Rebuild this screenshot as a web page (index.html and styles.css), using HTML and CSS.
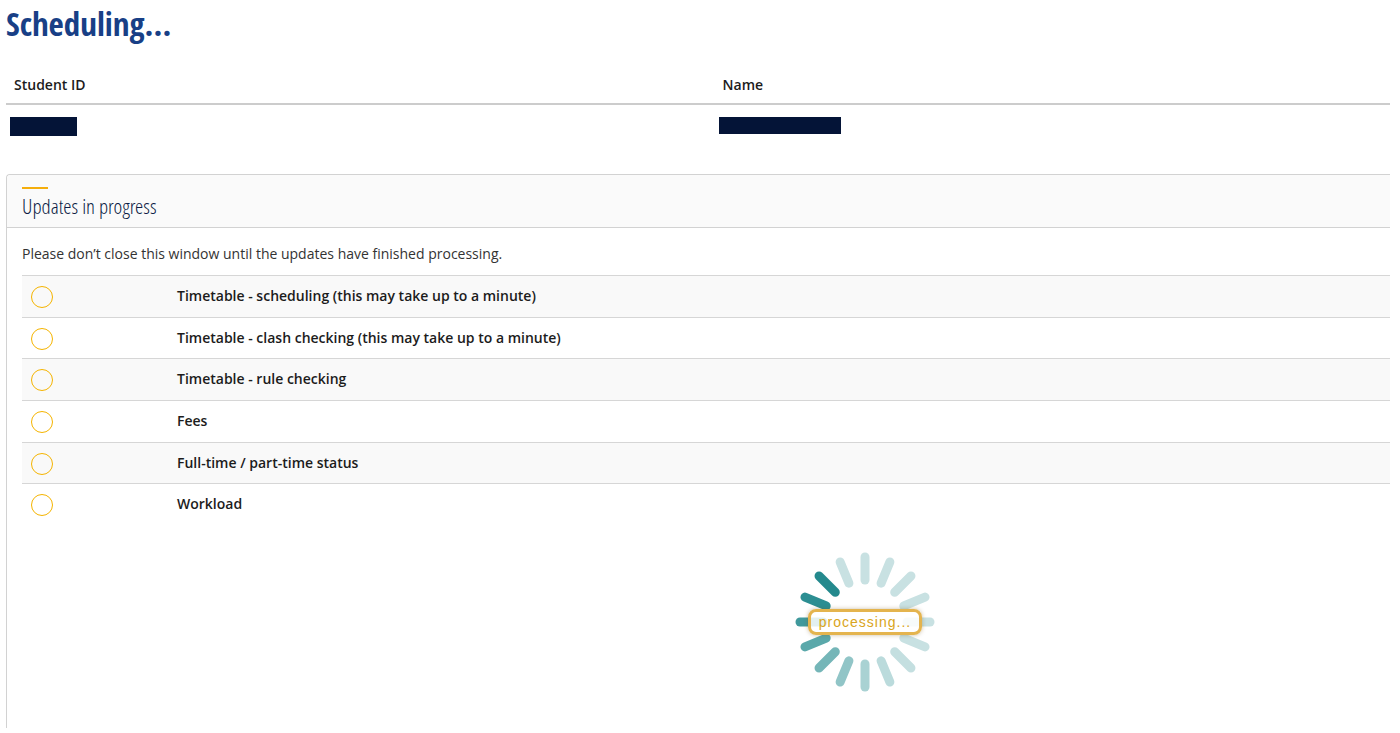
FILE: index.html
```html
<!DOCTYPE html>
<html lang="en">
<head>
    <meta charset="UTF-8">
    <meta name="viewport" content="width=device-width, initial-scale=1.0">
    <title>Scheduling...</title>
    <link rel="stylesheet" href="styles.css">
</head>
<body>
    <h1>Scheduling...</h1>

    <table class="student">
        <thead>
            <tr>
                <th>Student ID</th>
                <th>Name</th>
            </tr>
        </thead>
        <tbody>
            <tr>
                <td><span class="redacted redacted-id"></span></td>
                <td><span class="redacted redacted-name"></span></td>
            </tr>
        </tbody>
    </table>

    <section class="panel">
        <div class="panel-header">
            <h2>Updates in progress</h2>
        </div>
        <div class="panel-body">
            <p>Please don’t close this window until the updates have finished processing.</p>
            <table class="updates">
                <tr>
                    <td class="status"><span class="circle"></span></td>
                    <th scope="row">Timetable - scheduling (this may take up to a minute)</th>
                </tr>
                <tr>
                    <td class="status"><span class="circle"></span></td>
                    <th scope="row">Timetable - clash checking (this may take up to a minute)</th>
                </tr>
                <tr>
                    <td class="status"><span class="circle"></span></td>
                    <th scope="row">Timetable - rule checking</th>
                </tr>
                <tr>
                    <td class="status"><span class="circle"></span></td>
                    <th scope="row">Fees</th>
                </tr>
                <tr>
                    <td class="status"><span class="circle"></span></td>
                    <th scope="row">Full-time / part-time status</th>
                </tr>
                <tr>
                    <td class="status"><span class="circle"></span></td>
                    <th scope="row">Workload</th>
                </tr>
            </table>

            <div class="processing">
                <div class="spinner">
                    <svg viewBox="-70 -70 140 140" width="140" height="140" aria-hidden="true">
                        <g stroke-width="9" stroke-linecap="round">
                            <path d="M0-42V-65" stroke="#c8e1e2"/>
                            <path d="M0-42V-65" stroke="#c8e1e2" transform="rotate(22.5)"/>
                            <path d="M0-42V-65" stroke="#c8e1e2" transform="rotate(45)"/>
                            <path d="M0-42V-65" stroke="#c8e1e2" transform="rotate(67.5)"/>
                            <path d="M0-42V-65" stroke="#c8e1e2" transform="rotate(90)"/>
                            <path d="M0-42V-65" stroke="#c8e1e2" transform="rotate(112.5)"/>
                            <path d="M0-42V-65" stroke="#c4dfe0" transform="rotate(135)"/>
                            <path d="M0-42V-65" stroke="#bbdbdc" transform="rotate(157.5)"/>
                            <path d="M0-42V-65" stroke="#a9d2d3" transform="rotate(180)"/>
                            <path d="M0-42V-65" stroke="#91c5c7" transform="rotate(202.5)"/>
                            <path d="M0-42V-65" stroke="#75b6b8" transform="rotate(225)"/>
                            <path d="M0-42V-65" stroke="#5aa8aa" transform="rotate(247.5)"/>
                            <path d="M0-42V-65" stroke="#40999c" transform="rotate(270)"/>
                            <path d="M0-42V-65" stroke="#2c8e92" transform="rotate(292.5)"/>
                            <path d="M0-42V-65" stroke="#24898d" transform="rotate(315)"/>
                            <path d="M0-42V-65" stroke="#c8e1e2" transform="rotate(337.5)"/>
                        </g>
                    </svg>
                    <span class="spinner-label">processing...</span>
                </div>
            </div>
        </div>
    </section>
</body>
</html>
```

FILE: styles.css
```css
* {
    box-sizing: border-box;
}
body {
    display: flex;
    flex-direction: column;
    min-height: 100vh;
    margin: 0;
    padding: 0 10px 5px 6px;
    font-family: "Open Sans", "Noto Sans", sans-serif;
    font-size: 14px;
    line-height: 20px;
    color: #333;
    background: #fff;
}
h1, h2 {
    margin: 0;
}
h1 {
    font-family: "Open Sans Condensed", "Liberation Sans Narrow", sans-serif;
    font-size: 33px;
    line-height: 48px;
    font-weight: 700;
    color: #183f86;
}
table {
    width: 100%;
    border-collapse: collapse;
}
th {
    font-weight: 600;
    text-align: left;
    color: #1c1c1c;
}
.student {
    margin: 17px 0 38px;
}
.student th {
    width: 51.2%;
    padding: 10px 8px 8px;
    border-bottom: 2px solid #ccc;
}
.student th + th {
    width: auto;
}
.student td {
    padding: 12px 4px 0;
    vertical-align: top;
}
.redacted {
    display: block;
    background: #041437;
}
.redacted-id {
    width: 67px;
    height: 19px;
}
.redacted-name {
    width: 122px;
    height: 17px;
}
.panel {
    flex: 1;
    border: 1px solid #d2d2d2;
    border-width: 1px 0 0 1px;
    border-top-left-radius: 4px;
}
.panel-header {
    padding: 12px 15px 7px;
    background: #fafafa;
    border-bottom: 1px solid #d2d2d2;
    border-top-left-radius: 4px;
}
.panel-header::before {
    content: "";
    display: block;
    width: 26px;
    height: 2px;
    background: #f5ae0c;
}
h2 {
    padding-top: 3px;
    font-family: "Open Sans Condensed Light", "Liberation Sans Narrow", sans-serif;
    font-size: 21px;
    line-height: 28px;
    font-weight: 300;
    color: #0c1c45;
}
.panel-body {
    padding: 16px 0 0 15px;
}
.panel-body p {
    margin: 0 0 11px;
}
.updates {
    height: 250px;
}
.updates tr {
    border-top: 1px solid #d6d6d6;
}
.updates tr:nth-child(odd) {
    background: #f9f9f9;
}
.updates td,
.updates th {
    padding: 10px 8px 8px;
    vertical-align: top;
}
.updates tr:last-child {
    background: none;
}
.updates .status {
    width: 147px;
    padding-left: 9px;
}
.circle {
    display: block;
    width: 22px;
    height: 22px;
    border: 1px solid #f5b400;
    border-radius: 50%;
}
.processing {
    display: flex;
    justify-content: center;
    padding: 27px 0 0 318px;
}
.spinner {
    display: grid;
    place-items: center;
}
.spinner svg,
.spinner-label {
    grid-area: 1 / 1;
}
.spinner-label {
    z-index: 1;
    padding: 0 8px;
    border: 3px solid #e4b44e;
    border-radius: 8px;
    background: rgba(255, 255, 255, 0.85);
    box-shadow: 0 0 4px rgba(120, 90, 30, 0.4);
    font-family: "Liberation Sans", Arial, sans-serif;
    font-size: 14px;
    letter-spacing: 1px;
    color: #d9a520;
}
```
